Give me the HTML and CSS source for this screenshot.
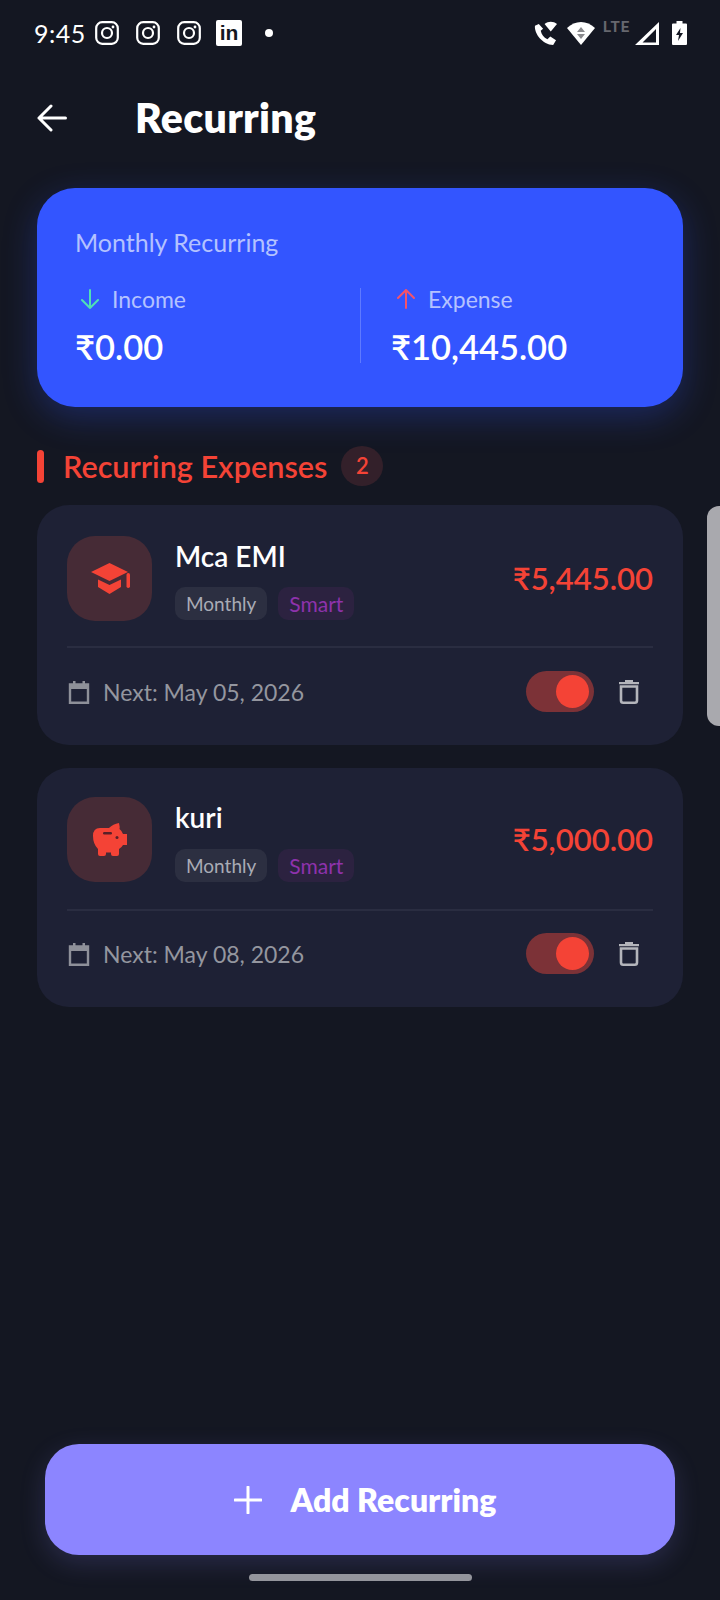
FILE: index.html
```html
<!DOCTYPE html>
<html lang="en">
<head>
<meta charset="utf-8">
<title>Recurring</title>
<link rel="stylesheet" href="styles.css">
</head>
<body>
<div class="screen">
  <div class="status">
    <div class="status-left">
      <span class="time">9:45</span>
      <svg class="ig" viewBox="0 0 24 24"><rect x="1.2" y="1.2" width="21.6" height="21.6" rx="6" class="st"/><circle cx="12" cy="12" r="5" class="st"/><circle cx="18" cy="6" r="1.4" class="fl"/></svg>
      <svg class="ig" viewBox="0 0 24 24"><rect x="1.2" y="1.2" width="21.6" height="21.6" rx="6" class="st"/><circle cx="12" cy="12" r="5" class="st"/><circle cx="18" cy="6" r="1.4" class="fl"/></svg>
      <svg class="ig" viewBox="0 0 24 24"><rect x="1.2" y="1.2" width="21.6" height="21.6" rx="6" class="st"/><circle cx="12" cy="12" r="5" class="st"/><circle cx="18" cy="6" r="1.4" class="fl"/></svg>
      <span class="li">in</span>
      <span class="dot"></span>
    </div>
    <div class="status-right">
      <svg class="sr phone" viewBox="0 0 24 26"><path class="fl" d="M5 3 L1 5 C0 13 9 25 20 25 L23 20 L17 16 L14 19 C10 17 8 14 7 10 L9.5 8 Z"/><path class="fl" d="M11 3 C15 0 20 0 24 3 L17.5 11 Z"/></svg>
      <svg class="sr wifi" viewBox="0 0 28 24"><path class="fl" d="M0 7 C8 -1 20 -1 28 7 L14 24 Z"/><path class="gr" d="M14 6 L18 11 H10 Z M10 13 H18 L14 18 Z"/></svg>
      <span class="lte">LTE</span>
      <svg class="sr signal" viewBox="0 0 24 23"><path class="fl" fill-rule="evenodd" d="M24 0 V23 H0 Z M21 7 L7.500 20.500 H21 Z"/></svg>
      <svg class="sr batt" viewBox="0 0 15 24"><path class="fl" fill-rule="evenodd" d="M4.500 0 H10.500 V2.500 H14 Q15 2.500 15 3.500 V23 Q15 24 14 24 H1 Q0 24 0 23 V3.500 Q0 2.500 1 2.500 H4.500 Z M8.500 7 L4 14 H7 L6 20 L11 12 H8 Z"/></svg>
    </div>
  </div>

  <header class="bar">
    <svg class="back" viewBox="0 0 30 30"><path d="M28.500 15 H2 M14 3 L2 15 L14 27"/></svg>
    <h1 class="title">Recurring</h1>
  </header>

  <section class="summary">
    <div class="summary-head">Monthly Recurring</div>
    <div class="summary-cols">
      <div class="col">
        <div class="col-label"><svg class="arrow down" viewBox="0 0 20 20"><path d="M10 1 V19 M2 11 L10 19 L18 11"/></svg>Income</div>
        <div class="col-value">₹0.00</div>
      </div>
      <div class="col-right">
        <div class="col-label"><svg class="arrow up" viewBox="0 0 20 20"><path d="M10 19 V1 M2 9 L10 1 L18 9"/></svg>Expense</div>
        <div class="col-value">₹10,445.00</div>
      </div>
    </div>
  </section>

  <div class="section">
    <span class="section-mark"></span>
    <h2 class="section-title">Recurring Expenses</h2>
    <span class="count">2</span>
  </div>

  <article class="item">
    <div class="item-top">
      <div class="item-icon">
        <svg class="cat" viewBox="0 0 39 31"><path class="rd" d="M18.500 0 L37 9 L18.500 18 L0 9 Z"/><path class="rd" d="M7 16.500 L18.500 22 L30 16.500 V24 L18.500 31 L7 24 Z"/><rect class="rd" x="35.500" y="10" width="3.500" height="15" rx="1.700"/></svg>
      </div>
      <div class="item-main">
        <div class="item-name">Mca EMI</div>
        <div class="chips"><span class="chip chip-gray">Monthly</span><span class="chip chip-purple">Smart</span></div>
      </div>
      <div class="item-amount">₹5,445.00</div>
    </div>
    <div class="item-bottom">
      <svg class="cal" viewBox="0 0 22 24"><path d="M2 4.500 H20 V22.700 H2 Z"/><path class="cal-head" d="M2 4.500 H20 V9 H2 Z M5 1 H7.500 V5 H5 Z M14.500 1 H17 V5 H14.500 Z"/></svg>
      <span class="next">Next: May 05, 2026</span>
      <span class="toggle"><span class="thumb"></span></span>
      <svg class="trash" viewBox="0 0 22 25"><path class="trash-top" d="M1 3 H21 V5.200 H1 Z M7 1 H15 V3 H7 Z"/><path d="M3 7.500 V21.500 Q3 23.700 5.200 23.700 H16.800 Q19 23.700 19 21.500 V7.500 Z"/></svg>
    </div>
  </article>

  <article class="item">
    <div class="item-top">
      <div class="item-icon">
        <svg class="pig" viewBox="0 0 34 33"><path class="rd" d="M7 5 H16 Q20 1 26 0 Q27 4 26.500 6 Q29 8 30 11 H34 V22 H30 Q29 24 26 26 V31 Q26 33 24 33 H20 Q18 33 18 31 V29.500 H13 V31 Q13 33 11 33 H7 Q5 33 5 31 V26 Q0 21 0 13 Q0 5 7 5 Z"/><rect x="10" y="9" width="9" height="2.500" rx="1.200" class="hole"/><circle cx="24" cy="14.500" r="1.500" class="hole"/></svg>
      </div>
      <div class="item-main">
        <div class="item-name">kuri</div>
        <div class="chips"><span class="chip chip-gray">Monthly</span><span class="chip chip-purple">Smart</span></div>
      </div>
      <div class="item-amount">₹5,000.00</div>
    </div>
    <div class="item-bottom">
      <svg class="cal" viewBox="0 0 22 24"><path d="M2 4.500 H20 V22.700 H2 Z"/><path class="cal-head" d="M2 4.500 H20 V9 H2 Z M5 1 H7.500 V5 H5 Z M14.500 1 H17 V5 H14.500 Z"/></svg>
      <span class="next">Next: May 08, 2026</span>
      <span class="toggle"><span class="thumb"></span></span>
      <svg class="trash" viewBox="0 0 22 25"><path class="trash-top" d="M1 3 H21 V5.200 H1 Z M7 1 H15 V3 H7 Z"/><path d="M3 7.500 V21.500 Q3 23.700 5.200 23.700 H16.800 Q19 23.700 19 21.500 V7.500 Z"/></svg>
    </div>
  </article>

  <button class="add">
    <svg class="plus" viewBox="0 0 28 28"><path d="M14 1 V27 M1 14 H27"/></svg>
    <span>Add Recurring</span>
  </button>
  <div class="home"></div>
  <div class="handle"></div>
</div>
</body>
</html>
```

FILE: styles.css
```css
* { box-sizing: border-box; }
html, body { margin: 0; padding: 0; }
body { background: #141722; font-family: "Lato", "DejaVu Sans", sans-serif; color: #fff; }
.screen { position: relative; width: 720px; height: 1600px; display: flex; flex-direction: column; padding: 0 37px; overflow: hidden; background: #141722; }

.status { height: 46px; margin: 10px -3px 0 -3px; display: flex; justify-content: space-between; align-items: center; }
.status-left, .status-right { display: flex; align-items: center; }
.time { font-size: 25px; width: 61px; letter-spacing: .5px; }
.ig { width: 24px; height: 24px; margin-right: 17px; }
.st { fill: none; stroke: #fff; stroke-width: 2.2; }
.fl { fill: #fff; }
.gr { fill: #8a8a8e; }
.li { width: 26px; height: 26px; background: #fff; color: #141722; font: 700 21px/26px "Liberation Sans", sans-serif; text-align: center; border-radius: 2px; margin-left: -2px; }
.dot { width: 8px; height: 8px; border-radius: 50%; background: #fff; margin-left: 23px; }
.status-right { margin-right: -1px; }
.sr { display: block; }
.phone { width: 23px; height: 25px; margin-right: 10px; }
.wifi { width: 28px; height: 24px; margin-right: 8px; }
.lte { font: 700 15px/15px "Roboto", sans-serif; color: #66676e; margin: -11px 4px 0 0; width: 28px; letter-spacing: 1px; }
.signal { width: 24px; height: 23px; margin-right: 13px; }
.batt { width: 15px; height: 24px; }

.bar { display: flex; align-items: center; height: 44px; margin-top: 40px; }
.back { width: 30px; height: 30px; flex: none; fill: none; stroke: #fff; stroke-width: 3; stroke-linecap: round; stroke-linejoin: round; }
.title { margin: 0 0 0 68px; font-size: 41px; font-weight: 800; line-height: 44px; letter-spacing: .3px; }

.summary { margin-top: 48px; height: 219px; border-radius: 38px; background: #3355ff; padding: 39px 38px 0; box-shadow: 0 10px 34px rgba(51, 85, 255, .28); }
.summary-head { font-size: 25px; line-height: 30px; color: #b4c2ff; }
.summary-cols { display: flex; margin-top: 31px; }
.col { flex: none; width: 285px; }
.col-right { flex: 1; border-left: 1px solid rgba(255, 255, 255, .22); padding-left: 30px; height: 75px; }
.col-label { display: flex; align-items: center; font-size: 23px; line-height: 22px; color: #b4c2ff; margin-left: 5px; }
.arrow { width: 20px; height: 20px; margin-right: 12px; fill: none; stroke-width: 2; stroke-linecap: round; stroke-linejoin: round; }
.down { stroke: #4fe0b5; }
.up { stroke: #f4536a; }
.col-value { font-size: 34.500px; line-height: 40px; font-weight: 600; margin-top: 17px; }

.section { display: flex; align-items: center; height: 40px; margin-top: 39px; }
.section-mark { width: 7px; height: 33px; border-radius: 4px; background: #f44336; }
.section-title { margin: 0 0 0 19px; font-size: 30.600px; font-weight: 600; color: #f44336; }
.count { width: 42px; height: 40px; margin-left: 14px; border-radius: 50%; background: #33202a; color: #f44336; font-size: 22px; font-weight: 600; line-height: 40px; text-align: center; }

.item { height: 240px; border-radius: 32px; background: #1e2135; padding: 31px 30px 0; margin-top: 19px; }
.item + .item { margin-top: 23px; padding-top: 29px; height: 239px; }
.item-top { display: flex; align-items: flex-start; height: 112px; border-bottom: 2px solid #2a2d41; }
.item + .item .item-top { height: 114px; }
.item + .item .item-bottom { height: 85px; }
.item + .item .chips { margin-top: 16px; }
.item-icon { width: 85px; height: 85px; border-radius: 28px; background: #462b36; display: flex; align-items: center; justify-content: center; flex: none; }
.cat { width: 39px; height: 31px; margin-left: 2px; }
.pig { width: 34px; height: 33px; }
.rd { fill: #f44336; }
.hole { fill: #5a2028; }
.item-main { margin-left: 23px; flex: 1; }
.item-name { font-size: 28px; line-height: 32px; font-weight: 600; margin-top: 4px; }
.chips { display: flex; gap: 11px; margin-top: 15px; }
.chip { height: 33px; border-radius: 10px; padding: 0 11px; font-size: 19px; line-height: 33px; }
.chip-gray { background: #2c2f41; color: #a9abb5; }
.chip-purple { background: #2c2240; color: #8e32ac; font-size: 21px; }
.item-amount { font-size: 31px; line-height: 36px; font-weight: 600; color: #f44336; margin-top: 23.500px; }
.item-bottom { display: flex; align-items: center; height: 87px; }
.cal { width: 22px; height: 24px; margin-left: 1px; fill: none; stroke: #8e9099; stroke-width: 2.400; }
.cal-head { fill: #8e9099; stroke: none; }
.next { margin-left: 13px; font-size: 23px; color: #94969f; flex: 1; }
.toggle { position: relative; width: 68px; height: 41px; border-radius: 21px; background: #7c3237; }
.thumb { position: absolute; right: 5px; top: 4px; width: 33px; height: 33px; border-radius: 50%; background: #f44336; }
.trash { width: 22px; height: 25px; margin-left: 24px; margin-right: 13px; fill: none; stroke: #b4b5bb; stroke-width: 2.600; }
.trash-top { fill: #b4b5bb; stroke: none; }

.add { margin: auto 8px 0; height: 111px; flex: none; border: 0; padding: 0 0 0 10px; border-radius: 34px; background: #8c85ff; color: #fff; display: flex; align-items: center; justify-content: center; font-family: inherit; font-size: 32px; font-weight: 800; box-shadow: 0 8px 26px rgba(140, 133, 255, .18); }
.plus { width: 28px; height: 28px; margin-right: 29px; fill: none; stroke: #fff; stroke-width: 3; stroke-linecap: round; }
.home { flex: none; width: 223px; height: 7px; border-radius: 4px; background: #94959c; margin: 19px auto; }
.handle { position: absolute; right: 0; top: 506px; width: 13px; height: 220px; border-radius: 12px 0 0 12px; background: #a9a9ae; }
```
